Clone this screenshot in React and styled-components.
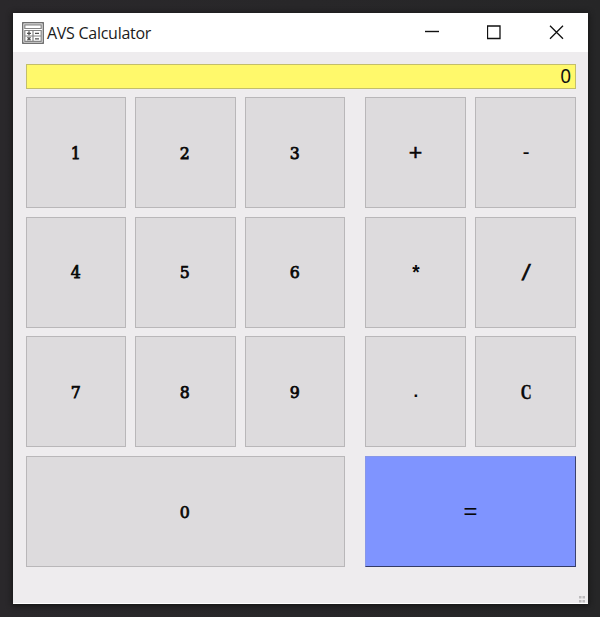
import React from "react";
import styled, { createGlobalStyle } from "styled-components";

const GlobalStyle = createGlobalStyle`
  * { box-sizing: border-box; }
  body { margin: 0; background: #272628; overflow: hidden; }
`;

const Desktop = styled.div`
  width: 600px;
  height: 617px;
  padding: 13px 12px 13px 13px;
  background: linear-gradient(90deg, #2a282b, #262627);
`;

const Window = styled.main`
  display: flex;
  flex-direction: column;
  width: 575px;
  height: 591px;
  background: #eeecee;
  border-bottom: 1px solid #fff;
  box-shadow: 0 1px 5px 1px #151515;
`;

const TitleBar = styled.header`
  display: flex;
  align-items: center;
  height: 39px;
  flex: none;
  padding: 0 24px 0 9px;
  background: #fff;
`;

const Title = styled.h1`
  flex: 1;
  margin: 0 0 0 3px;
  font: 400 16px/22px "Open Sans", "Noto Sans", sans-serif;
  letter-spacing: -0.27px;
  color: #1b1b1b;
`;

const Controls = styled.div`
  display: flex;
  gap: 47.5px;
`;

const WindowButton = styled.button`
  display: flex;
  width: 15px;
  height: 15px;
  padding: 0;
  border: 0;
  background: none;
`;

const Display = styled.output`
  display: flex;
  align-items: center;
  justify-content: flex-end;
  flex: none;
  height: 25px;
  margin: 12px 12px 8px 12.5px;
  padding-right: 4px;
  border: 1px solid #c3be6b;
  background: #fff96b;
  color: #111;
  font: 400 19px/23px "Noto Sans", "Open Sans", sans-serif;
`;

const Keypad = styled.section`
  display: grid;
  grid-template-columns: 100.5px 100.5px 100.5px 2px 101px 101px;
  grid-template-rows: repeat(4, 111px);
  column-gap: 9.1px;
  row-gap: 8.7px;
  margin-left: 12.5px;
`;

const Key = styled.button`
  grid-column: ${(p) => p.$column};
  display: flex;
  align-items: center;
  justify-content: center;
  padding: 0;
  border: 1px solid #b9b7b9;
  background: #dddbdd;
  color: #080808;
`;

const EqualsKey = styled(Key)`
  border-color: #8797e8 #3b426f #343b66 #8797e8;
  border-bottom-width: 1.5px;
  background: #7f94ff;
`;

const Digit = styled.span`
  font: 400 17px/20px "DejaVu Serif Condensed", "DejaVu Serif", serif;
  font-stretch: condensed;
  -webkit-text-stroke: 0.75px #080808;
  transform: scaleX(1.03);
`;

const Letter = styled.span`
  font: 700 20px/20px "Liberation Serif", serif;
  -webkit-text-stroke: 0.4px #080808;
  transform: scaleX(0.75);
`;

const Operator = styled.span`
  font: ${(p) => p.$weight || 400} ${(p) => p.$size}px/20px "Liberation Sans", sans-serif;
  -webkit-text-stroke: ${(p) => p.$stroke || 0}px #080808;
  transform: translateY(${(p) => p.$shift || 0}px) scaleX(${(p) => p.$stretch || 1}) skewX(${(p) => p.$slant || 0}deg);
`;

const Footer = styled.footer`
  display: flex;
  flex: 1;
  align-items: flex-end;
  justify-content: flex-end;
  padding: 0 2px 0 0;
`;

const operators = {
  "+": { $size: 22, $stroke: 0.5, $shift: -0.5, $stretch: 1.05 },
  "-": { $size: 20, $stroke: 0.2, $shift: -1 },
  "*": { $size: 20, $weight: 700, $stretch: 0.95 },
  "/": { $size: 22, $stroke: 0.8, $slant: -10, $shift: 1 },
  ".": { $size: 17, $weight: 700 },
  "=": { $size: 22, $stroke: 0.1, $stretch: 1.08 },
};

const keys = [
  ["1", 1], ["2", 2], ["3", 3], ["+", 5], ["-", 6],
  ["4", 1], ["5", 2], ["6", 3], ["*", 5], ["/", 6],
  ["7", 1], ["8", 2], ["9", 3], [".", 5], ["C", 6],
  ["0", "1 / 4"],
];

function KeyLabel({ label }) {
  if (operators[label]) return <Operator {...operators[label]}>{label}</Operator>;
  if (label === "C") return <Letter>C</Letter>;
  return <Digit>{label}</Digit>;
}

const CalculatorIcon = () => (
  <svg width="22" height="22" viewBox="0 0 22 22" fill="none">
    <rect x=".75" y=".75" width="20.5" height="20.5" stroke="#626262" strokeWidth="1.3" />
    <path d="M2.8 2.8h16.4v3.7H2.8zM2.8 8.5h16.4v10.9H2.8zM11 8.5v11M2.8 14h16.4" stroke="#858585" strokeWidth="1.2" />
    <path d="M5 11.3h4M7 9.3v4M13 11.3h4M5.5 15.2l3 3m0-3-3 3M13 16.8h4" stroke="#505050" strokeWidth="1.3" />
  </svg>
);

export default function App() {
  return (
    <>
      <GlobalStyle />
      <Desktop>
        <Window>
          <TitleBar>
            <CalculatorIcon />
            <Title>AVS Calculator</Title>
            <Controls>
              <WindowButton aria-label="Minimize">
                <svg width="15" height="15" stroke="#111" strokeWidth="1.4"><path d="M1 6.5h14" /></svg>
              </WindowButton>
              <WindowButton aria-label="Maximize">
                <svg width="15" height="15" fill="none" stroke="#111" strokeWidth="1.3"><path d="M.5 1h12.5v12.5H.5z" /></svg>
              </WindowButton>
              <WindowButton aria-label="Close">
                <svg width="15" height="15" stroke="#111" strokeWidth="1.3"><path d="m1 .8 13 13M14 .8l-13 13" /></svg>
              </WindowButton>
            </Controls>
          </TitleBar>
          <Display>0</Display>
          <Keypad>
            {keys.map(([label, column]) => (
              <Key key={label} $column={column}><KeyLabel label={label} /></Key>
            ))}
            <EqualsKey $column="5 / 7"><KeyLabel label="=" /></EqualsKey>
          </Keypad>
          <Footer>
            <svg width="7" height="7" fill="#bdbbbd"><path d="M0 0h2.5v2.5H0zM3.5 0H6v2.5H3.5zM0 4h2.5v2.5H0zM3.5 4H6v2.5H3.5z" /></svg>
          </Footer>
        </Window>
      </Desktop>
    </>
  );
}
